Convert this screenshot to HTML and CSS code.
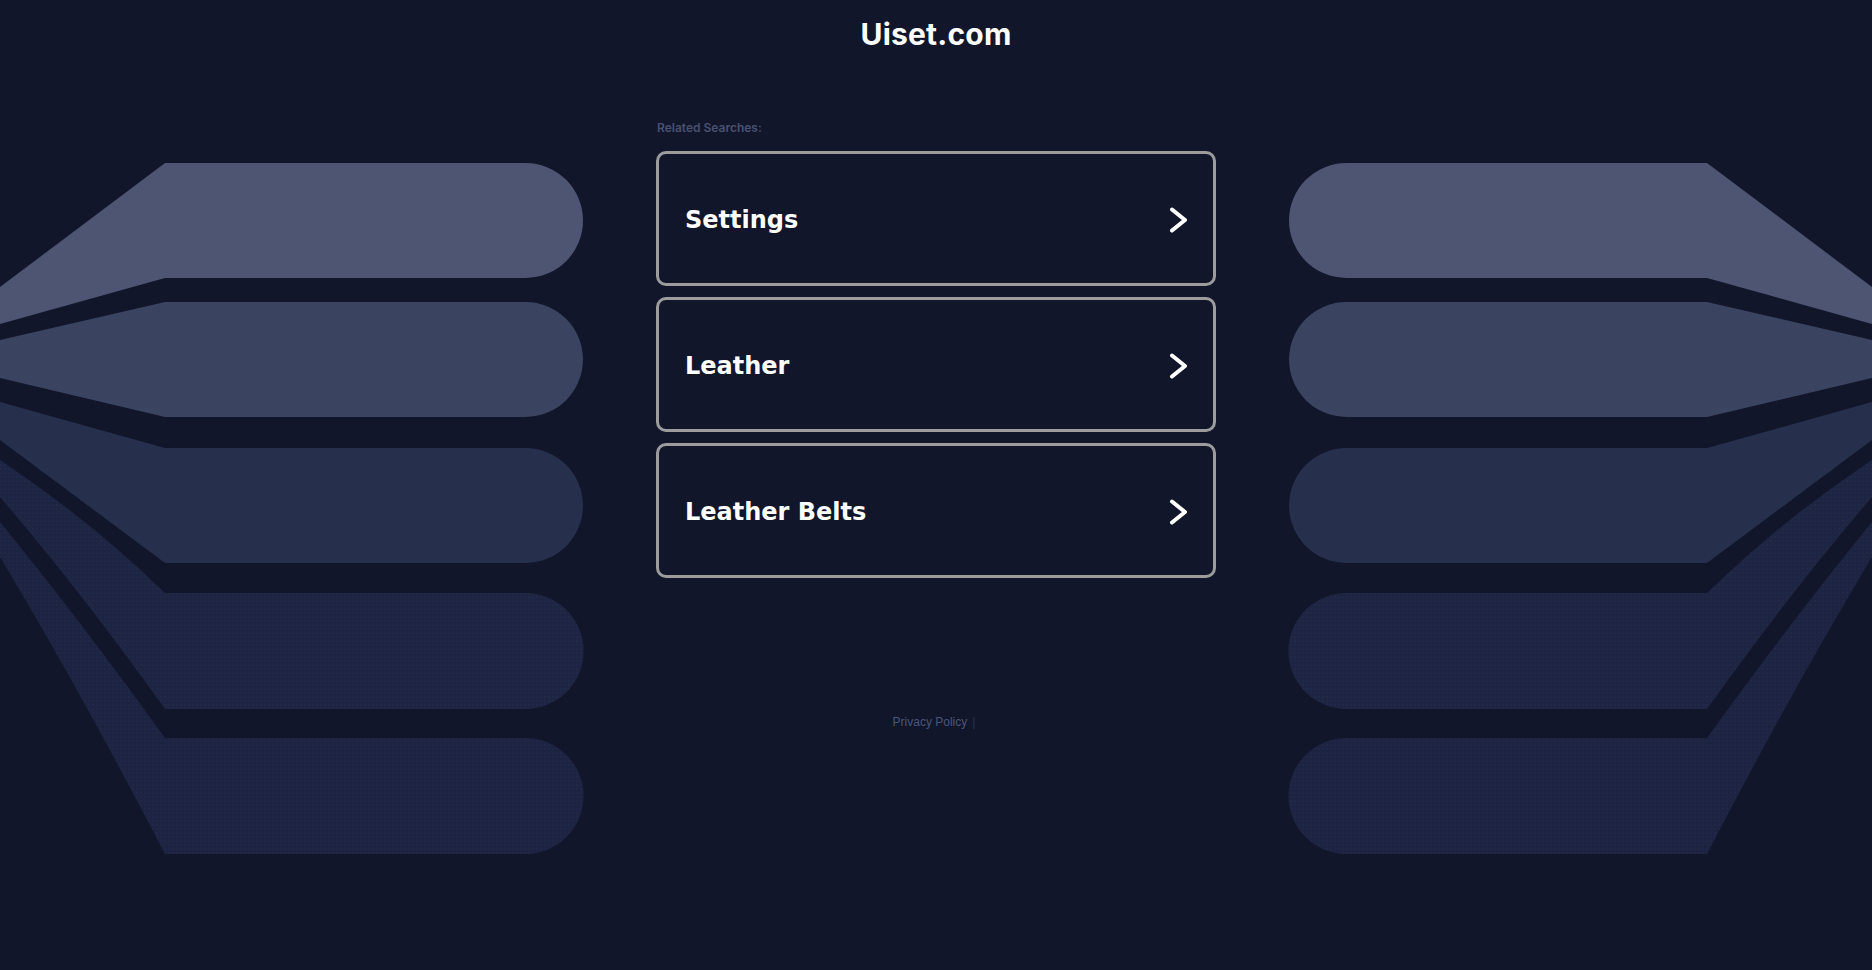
FILE: index.html
```html
<!DOCTYPE html>
<html lang="en">
<head>
<meta charset="utf-8">
<title>Uiset.com</title>
<link rel="stylesheet" href="styles.css">
</head>
<body>
<svg class="backdrop" viewBox="0 0 1872 970" width="1872" height="970" aria-hidden="true">
  <defs>
    <pattern id="dots" width="4" height="4" patternUnits="userSpaceOnUse">
      <rect width="4" height="4" fill="#1d2543"/>
      <circle cx="1" cy="1" r="0.7" fill="#273052"/>
    </pattern>
    <g id="bands">
      <path d="M0,287 L165,163 H525.5 A57.5,57.5 0 0 1 525.5,278 H165 L0,324 Z" fill="#4d5572"/>
      <path d="M0,340 L165,302 H525.5 A57.5,57.5 0 0 1 525.5,417 H165 L0,378 Z" fill="#3a4360"/>
      <path d="M0,402 L165,448 H525.5 A57.5,57.5 0 0 1 525.5,563 H165 L0,440 Z" fill="#262f4c"/>
      <path d="M0,460 Q90,520 165,593 H525.5 A58,58 0 0 1 525.5,709 H165 Q80,590 0,497 Z" fill="url(#dots)"/>
      <path d="M0,522 Q80,620 165,738 H525.5 A58,58 0 0 1 525.5,854 H165 Q80,690 0,557 Z" fill="url(#dots)" opacity="0.92"/>
    </g>
  </defs>
  <use href="#bands"/>
  <use href="#bands" transform="translate(1872,0) scale(-1,1)"/>
</svg>

<main class="page">
  <h1 class="brand">Uiset.com</h1>
  <section class="related">
    <p class="related-label">Related Searches:</p>
    <ul class="links">
      <li><a class="link-card" href="#"><span>Settings</span>
        <svg class="chev" width="18" height="26" viewBox="0 0 18 26"><path d="M3,2.5 L16,13 L3,23.5" /></svg></a></li>
      <li><a class="link-card" href="#"><span>Leather</span>
        <svg class="chev" width="18" height="26" viewBox="0 0 18 26"><path d="M3,2.5 L16,13 L3,23.5" /></svg></a></li>
      <li><a class="link-card" href="#"><span>Leather Belts</span>
        <svg class="chev" width="18" height="26" viewBox="0 0 18 26"><path d="M3,2.5 L16,13 L3,23.5" /></svg></a></li>
    </ul>
  </section>
  <footer class="footer">
    <a href="#" class="policy">Privacy Policy</a><span class="sep">|</span>
  </footer>
</main>
</body>
</html>
```

FILE: styles.css
```css
html, body {
  margin: 0;
  padding: 0;
}
body {
  background: #11162b;
  min-height: 970px;
  position: relative;
  overflow: hidden;
}
.backdrop {
  position: absolute;
  left: 0;
  top: 0;
  z-index: 0;
}
.page {
  position: relative;
  z-index: 1;
  display: flex;
  flex-direction: column;
  align-items: center;
}
.brand {
  margin: 0;
  padding-top: 16px;
  font-family: Inter, "Open Sans", sans-serif;
  font-weight: 700;
  font-size: 30px;
  line-height: 36px;
  color: #ffffff;
  letter-spacing: 0.2px;
}
.related {
  width: 560px;
  margin-top: 69px;
}
.related-label {
  margin: 0 0 16px 1px;
  font-family: Inter, "Open Sans", sans-serif;
  font-weight: 600;
  font-size: 12px;
  line-height: 14px;
  color: #49516f;
}
.links {
  list-style: none;
  margin: 0;
  padding: 0;
  display: flex;
  flex-direction: column;
  gap: 11px;
}
.link-card {
  box-sizing: border-box;
  height: 135px;
  display: flex;
  align-items: center;
  justify-content: space-between;
  padding: 3px 26px 0 26px;
  border: 3px solid #9c9c9c;
  border-radius: 10px;
  background: #11162b;
  text-decoration: none;
  color: #ffffff;
  font-family: "DejaVu Sans", Verdana, sans-serif;
  font-weight: 700;
  font-size: 24px;
}
.chev path {
  fill: none;
  stroke: #ffffff;
  stroke-width: 4;
  stroke-linecap: round;
  stroke-linejoin: round;
}
.footer {
  margin-top: 137px;
  padding-right: 4px;
  font-family: "Liberation Sans", Arial, sans-serif;
  font-size: 12px;
  line-height: 14px;
}
.policy {
  color: #4b5578;
  text-decoration: none;
}
.sep {
  color: #2c3350;
  margin-left: 5px;
}
```
